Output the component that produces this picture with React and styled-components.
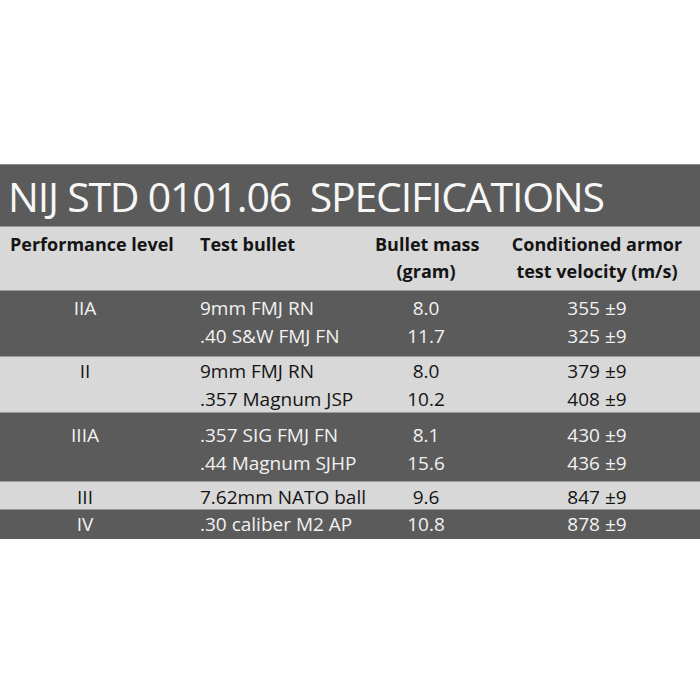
import React from "react";
import styled, { createGlobalStyle } from "styled-components";

const Global = createGlobalStyle`
  html, body { margin: 0; padding: 0; background: #ffffff; }
  body { width: 700px; height: 700px; font-family: "Open Sans", "Noto Sans", sans-serif; }
`;

const Page = styled.div`
  width: 700px;
  height: 700px;
  padding-top: 164px;
  box-sizing: border-box;
`;

const Title = styled.div`
  height: 62px;
  background: #5b5b5b;
  color: #f6f6f6;
  font-size: 41px;
  line-height: 62px;
  padding-left: 8px;
  letter-spacing: -1.2px;
  white-space: pre;
  border-top: 1px solid #8a8a8a;
  box-sizing: border-box;
`;

const Band = styled.div`
  display: grid;
  grid-template-columns: 170px 205px 102px 1fr;
  background: ${(p) => (p.$dark ? "#5b5b5b" : "#d8d8d8")};
  color: ${(p) => (p.$dark ? "#f2f2f2" : "#141414")};
  height: ${(p) => p.$h}px;
  padding-top: ${(p) => p.$pt || 0}px;
  box-sizing: border-box;
  border-top: 1px solid #9a9a9a;
  font-size: ${(p) => (p.$head ? 18 : 19)}px;
  line-height: ${(p) => (p.$head ? 27 : 28)}px;
  font-weight: ${(p) => (p.$head ? 700 : 400)};
`;

const Cell = styled.div`
  text-align: ${(p) => p.$align || "center"};
  padding-left: ${(p) => p.$pl || 0}px;
  white-space: nowrap;
`;

const rows = [
  { level: "IIA", dark: true, h: 66, pt: 3, items: [["9mm FMJ RN", "8.0", "355 ±9"], [".40 S&W FMJ FN", "11.7", "325 ±9"]] },
  { level: "II", dark: false, h: 56, pt: 0, items: [["9mm FMJ RN", "8.0", "379 ±9"], [".357 Magnum JSP", "10.2", "408 ±9"]] },
  { level: "IIIA", dark: true, h: 69, pt: 8, items: [[".357 SIG FMJ FN", "8.1", "430 ±9"], [".44 Magnum SJHP", "15.6", "436 ±9"]] },
  { level: "III", dark: false, h: 28, pt: 1, items: [["7.62mm NATO ball", "9.6", "847 ±9"]] },
  { level: "IV", dark: true, h: 30, pt: 0, items: [[".30 caliber M2 AP", "10.8", "878 ±9"]] },
];

const Lines = ({ list }) => list.map((t, i) => <div key={i}>{t}</div>);

export default function App() {
  return (
    <Page>
      <Global />
      <Title>{"NIJ STD 0101.06  SPECIFICATIONS"}</Title>
      <Band $head $h={64} $pt={4}>
        <Cell $align="left" $pl={10}>Performance level</Cell>
        <Cell $align="left" $pl={30}>Test bullet</Cell>
        <Cell><Lines list={["Bullet mass", "(gram)"]} /></Cell>
        <Cell $pl={17}><Lines list={["Conditioned armor", "test velocity (m/s)"]} /></Cell>
      </Band>
      {rows.map((r) => (
        <Band key={r.level} $dark={r.dark} $h={r.h} $pt={r.pt}>
          <Cell>{r.level}</Cell>
          <Cell $align="left" $pl={30}><Lines list={r.items.map((x) => x[0])} /></Cell>
          <Cell><Lines list={r.items.map((x) => x[1])} /></Cell>
          <Cell $pl={17}><Lines list={r.items.map((x) => x[2])} /></Cell>
        </Band>
      ))}
    </Page>
  );
}
